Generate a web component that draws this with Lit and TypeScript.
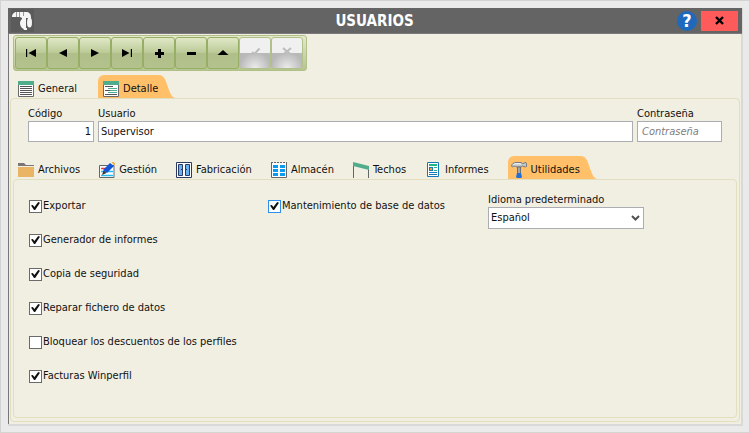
import { LitElement, html, css, svg, nothing } from "lit";
import { customElement, state } from "lit/decorators.js";

const glyphs: Record<string, unknown> = {
  first: svg`<path d="M3 4h1.200v8H3z" /><path d="M13 4v8L5.500 8z" />`,
  prev: svg`<path d="M12 4v8L4 8z" />`,
  next: svg`<path d="M4 4v8l8-4z" />`,
  last: svg`<path d="M3 4v8l7.500-4z" /><path d="M11.800 4H13v8h-1.200z" />`,
  add: svg`<path d="M7 4h3v3h3v3h-3v3H7v-3H4V7h3z" />`,
  remove: svg`<path d="M4 7h9v3H4z" />`,
  edit: svg`<path d="M8 5l5.500 5h-11z" />`,
  post: svg`<path d="M5 7L7.500 9l5-5.500" fill="none" stroke="#bcbcbc" stroke-width="2" />`,
  cancel: svg`<path d="M4 3l4 3.500L12 3M5 8.500l3-2L11 8.500" fill="none" stroke="#bcbcbc" stroke-width="2" />`,
};

const icons: Record<string, unknown> = {
  general: svg`<path d="M.5.5h15v15H.5z" fill="#fff" stroke="#6a6a6a" /><path d="M0 0h16v4H0z" fill="#50ad8b" />
    <path d="M2 5.500h12M2 7.500h12M2 9.500h12M2 11.500h12M2 13.500h12" stroke="#555" />`,
  detail: svg`<path d="M.5.5h15v15H.5z" fill="#fff" stroke="#6a6a6a" /><path d="M0 0h16v4H0z" fill="#50ad8b" />
    <path d="M2 5.500h8M2 9.500h5M2 13.500h12" stroke="#555" /><path d="M5 7.500h9M7 9.500h7M5 11.500h9" stroke="#50ad8b" />`,
  files: svg`<path d="M0 1h6l2 2h8v1H0z" fill="#7a7676" /><path d="M0 5h16v10H0z" fill="#e9b565" />`,
  manage: svg`<path d="M.5 3.500h14.500v12H.5z" fill="#fff" stroke="#666" /><path d="M2 6.500h5" stroke="#f33" stroke-width="1.500" />
    <path d="M2 9.500h12M2 13.500h12" stroke="#24bdf0" stroke-width="1.500" />
    <path d="M11 1l4 3-7 7-4-3z" fill="#1556d8" /><path d="M12.500 0L14-.5l2 2-.5 2z" fill="#f5a623" /><path d="M4.500 8.500L7.500 11 3 13z" fill="#43302c" />`,
  factory: svg`<path d="M.5.500h15v15H.5z" fill="#fff" stroke="#2b3a63" /><path d="M2.500 2.500h4v11h-4zM9.500 2.500h4v11h-4z" fill="#6bb0f2" stroke="#2b3a63" />
    <path d="M5 7.500h1M10 7.500h1" stroke="#2b3a63" />`,
  store: svg`<path d="M.5 1v14.500h15V1" fill="#fff" stroke="#666" /><path d="M0 .500h16" stroke="#666" stroke-dasharray="2 1" />
    <path d="M2 3h5v3H2zM9 3h5v3H9zM2 7h5v3H2zM9 7h5v3H9zM2 11h5v3H2zM9 11h5v3H9z" fill="#0a9af0" />`,
  roofs: svg`<path d="M.500 3v13M15.500 6v10" stroke="#666" /><path d="M0 0l16 4v4L0 4z" fill="#50ad8b" />`,
  reports: svg`<path d="M2.500.500h11v14h-11z" fill="#fff" stroke="#1478b8" /><path d="M4 3h8" stroke="#21b58a" stroke-width="2" />
    <path d="M4 5h4v4H4z" fill="#1478b8" /><path d="M5 6h2v2H5z" fill="#f2a33a" /><path d="M9 5.500h3M9 8.500h3" stroke="#21b58a" /><path d="M4 10.500h8M4 12.500h8" stroke="#1478b8" />`,
  tools: svg`<path d="M.5 4C1 1.500 3 .500 5 .500h5l1.500 1L15 .500l.5 1v3l-1 .5-3-1-1.500 1H6C4 4 2.500 4 1.500 5z" fill="#c3c8cc" stroke="#737a80" />
    <path d="M2.500 2.500C4 1.500 6 1.500 10 2" stroke="#fff" fill="none" /><path d="M6.500 5h3v7h-3z" fill="#a6a6a6" stroke="#707070" /><path d="M6 11h4l1 4-1 1H6l-1-1z" fill="#1f6fd6" />`,
};

interface Tab {
  id: string;
  label: string;
  icon: string;
}

const mainTabs: Tab[] = [
  { id: "general", label: "General", icon: "general" },
  { id: "detalle", label: "Detalle", icon: "detail" },
];

const permissionTabs: Tab[] = [
  { id: "archivos", label: "Archivos", icon: "files" },
  { id: "gestion", label: "Gestión", icon: "manage" },
  { id: "fabricacion", label: "Fabricación", icon: "factory" },
  { id: "almacen", label: "Almacén", icon: "store" },
  { id: "techos", label: "Techos", icon: "roofs" },
  { id: "informes", label: "Informes", icon: "reports" },
  { id: "utilidades", label: "Utilidades", icon: "tools" },
];

const commands = [
  ["first", "Primero"],
  ["prev", "Anterior"],
  ["next", "Siguiente"],
  ["last", "Último"],
  ["add", "Añadir"],
  ["remove", "Eliminar"],
  ["edit", "Editar"],
  ["post", "Guardar"],
  ["cancel", "Cancelar"],
];

@customElement("app-root")
export class AppRoot extends LitElement {
  @state() private mainTab = "detalle";
  @state() private permissionTab = "utilidades";

  static styles = css`
    :host {
      display: block;
      font: 11px/14px "DejaVu Sans Condensed", "Noto Sans", sans-serif;
      color: #111;
    }
    * {
      box-sizing: border-box;
    }
    button,
    input,
    select {
      font: inherit;
      color: inherit;
      margin: 0;
      border-radius: 0;
    }
    svg {
      display: block;
      flex: none;
    }
    .desktop {
      display: flex;
      min-height: 100vh;
      padding: 7px 6px 6px 7px;
      background: #eaeaea;
      border: 1px solid #d3d3d3;
    }
    .window {
      flex: 1;
      display: flex;
      flex-direction: column;
      background: #f1efe2;
      border: solid #d9d9d9;
      border-width: 0 2px 2px 0;
      box-shadow: inset 1px 0 #77777a;
    }
    .titlebar {
      display: flex;
      align-items: center;
      height: 26px;
      padding: 0 4px 0 3px;
      margin-right: -1px;
      background: #646464;
      border-bottom: 1px solid #7d7880;
    }
    .side {
      flex: 1;
      display: flex;
      align-items: center;
      gap: 4px;
    }
    .side.end {
      justify-content: flex-end;
    }
    .title {
      margin: 0;
      font-size: 15px;
      line-height: 24px;
      font-weight: bold;
      color: #fff;
    }
    .help,
    .close {
      display: grid;
      place-items: center;
      padding: 0;
      border: 0;
      height: 20px;
    }
    .help {
      width: 20px;
      border-radius: 50%;
      background: #1f69bd;
      color: #fff;
      font-size: 18px;
      line-height: 20px;
      font-weight: bold;
    }
    .close {
      width: 37px;
      background: #ff5b5b;
    }
    .toolbar {
      display: flex;
      align-self: flex-start;
      margin: 1px 0 0 5px;
      padding: 1px 3px 1px 1px;
      border: 1px solid #b1c088;
      border-radius: 3px;
      background: linear-gradient(#e3e9cb, #b4c48f);
    }
    .command {
      display: grid;
      place-items: center;
      width: 32px;
      height: 32px;
      padding: 0;
      border: 1px solid #98ad66;
      border-radius: 3px;
      background: linear-gradient(#e0e8c6, #bccb98 48%, #b0bf8a 52%, #b4c38e);
    }
    .command:disabled {
      border-color: #b1c088;
      background: radial-gradient(ellipse at 50% 100%, #ececec, #b8b8b8 75%) 0 100% / 100% 50% no-repeat, #f0f0f0;
    }
    .tabs {
      display: flex;
      height: 23px;
      gap: 19px;
      padding-left: 8px;
    }
    .tabs.main {
      margin: 4px 0 0 2px;
      gap: 21px;
    }
    .tabs.inner {
      margin-top: 14px;
      padding-left: 5px;
    }
    .tab {
      display: flex;
      align-items: center;
      gap: 4px;
      padding: 4px 0 0;
      border: 0;
      background: none;
      white-space: nowrap;
    }
    .tab.active {
      position: relative;
      padding-left: 5px;
      border-radius: 6px 0 0 0;
      background: #ffc069;
    }
    .inner .tab.active {
      padding-left: 3px;
    }
    .tail {
      position: absolute;
      left: 100%;
      top: 0;
    }
    .panel {
      flex: 1;
      display: flex;
      flex-direction: column;
      border: 1px solid #e1dfbf;
      border-radius: 4px;
    }
    .panel.outer {
      margin: 0 1px 2px 2px;
      padding: 8px 2px 3px;
    }
    .fields {
      display: grid;
      grid-template-columns: 66px 1fr 85px;
      column-gap: 4px;
      padding: 0 15px;
    }
    .field {
      display: flex;
      flex-direction: column;
      min-width: 0;
    }
    .box {
      width: 100%;
      height: 21px;
      padding: 0 2px;
      border: 1px solid #abadb3;
      background: #fff;
      outline: 0;
    }
    .box.number {
      text-align: right;
    }
    .box.secret {
      padding-left: 4px;
    }
    .box::placeholder {
      color: #808080;
      font-style: italic;
      opacity: 1;
    }
    .options {
      display: grid;
      grid-template-columns: 239px 220px 156px;
      padding: 13px 15px;
    }
    .checks {
      display: flex;
      flex-direction: column;
      gap: 20px;
      padding-top: 6px;
    }
    .check {
      display: flex;
      align-items: center;
      gap: 1px;
      white-space: nowrap;
    }
    .tick {
      appearance: none;
      flex: none;
      width: 13px;
      height: 13px;
      border: 1px solid #6a6a6a;
      background: #fff;
      display: grid;
      place-items: center;
    }
    .tick.hot {
      border-color: #2f8fee;
    }
    .tick:checked::before {
      content: "";
      width: 9px;
      height: 8px;
      background: #111;
      clip-path: polygon(0 44%, 20% 38%, 38% 62%, 80% 0, 100% 10%, 46% 100%, 34% 100%);
    }
    .picker {
      position: relative;
    }
    .choice {
      appearance: none;
      height: 22px;
    }
    .arrow {
      position: absolute;
      right: 4px;
      top: 8px;
      pointer-events: none;
    }
  `;

  private renderTabs(tabs: Tab[], current: string, kind: string, pick: (id: string) => void) {
    return html`<div class="tabs ${kind}" role="tablist">
      ${tabs.map(
        (t) => html`<button
          class="tab ${t.id === current ? "active" : ""}"
          role="tab"
          aria-selected=${t.id === current ? "true" : "false"}
          @click=${() => pick(t.id)}
        >
          <svg width="16" height="16" viewBox="0 0 16 16">${icons[t.icon]}</svg>
          <span>${t.label}</span>
          ${t.id === current
            ? html`<svg class="tail" width="17" height="23" viewBox="0 0 17 23"><path d="M0 0C8 0 8 8 11 15C13 20 14 22 17 23H0z" fill="#ffc069" /></svg>`
            : nothing}
        </button>`
      )}
    </div>`;
  }

  private renderCheck(label: string, checked: boolean, hot = false) {
    return html`<label class="check"><input class="tick ${hot ? "hot" : ""}" type="checkbox" .checked=${checked} />${label}</label>`;
  }

  render() {
    return html`<div class="desktop">
      <main class="window">
        <header class="titlebar">
          <div class="side">
            <svg width="23" height="23" viewBox="0 0 23 23">
              <path d="M0 0h23v23H0z" fill="#5b5b5b" />
              <path d="M1 8C1 5 3 3 6 3h9c3 0 5 2 5 5v1h-9L9 8z" fill="#f5f5f5" />
              <path d="M11 8h4v12h-1c-3 0-5-3-5-6 0-2 1-3 2-4z" fill="#f5f5f5" />
              <path d="M12 19h4v2h-3z" fill="#f5f5f5" />
              <ellipse cx="18.500" cy="13.500" rx="2.500" ry="5" fill="#f5f5f5" />
              <path d="M5.500 3v5M8.500 3v5M12.500 3v4" stroke="#9a9a9a" fill="none" />
            </svg>
          </div>
          <h1 class="title">USUARIOS</h1>
          <div class="side end">
            <button class="help" aria-label="Ayuda">?</button>
            <button class="close" aria-label="Cerrar">
              <svg width="9" height="9" viewBox="0 0 9 9"><path d="M1 1l7 7M8 1L1 8" stroke="#000" stroke-width="2.400" /></svg>
            </button>
          </div>
        </header>

        <div class="toolbar" role="toolbar">
          ${commands.map(
            ([id, label]) => html`<button class="command" aria-label=${label} ?disabled=${id === "post" || id === "cancel"}>
              <svg width="16" height="16" viewBox="0 0 16 16">${glyphs[id]}</svg>
            </button>`
          )}
        </div>

        ${this.renderTabs(mainTabs, this.mainTab, "main", (id) => (this.mainTab = id))}
        <section class="panel outer">
          <div class="fields">
            <label class="field">Código<input class="box number" value="1" /></label>
            <label class="field">Usuario<input class="box" value="Supervisor" /></label>
            <label class="field">Contraseña<input class="box secret" type="password" placeholder="Contraseña" /></label>
          </div>

          ${this.renderTabs(permissionTabs, this.permissionTab, "inner", (id) => (this.permissionTab = id))}
          <section class="panel">
            <div class="options">
              <div class="checks">
                ${this.renderCheck("Exportar", true)} ${this.renderCheck("Generador de informes", true)}
                ${this.renderCheck("Copia de seguridad", true)} ${this.renderCheck("Reparar fichero de datos", true)}
                ${this.renderCheck("Bloquear los descuentos de los perfiles", false)} ${this.renderCheck("Facturas Winperfil", true)}
              </div>
              <div class="checks">${this.renderCheck("Mantenimiento de base de datos", true, true)}</div>
              <label class="field">
                Idioma predeterminado
                <span class="picker">
                  <select class="box choice">
                    <option>Español</option>
                    <option>English</option>
                  </select>
                  <svg class="arrow" width="9" height="7" viewBox="0 0 9 7"><path d="M1 1l3.500 3.500L8 1" fill="none" stroke="#505050" stroke-width="2" /></svg>
                </span>
              </label>
            </div>
          </section>
        </section>
      </main>
    </div>`;
  }
}
